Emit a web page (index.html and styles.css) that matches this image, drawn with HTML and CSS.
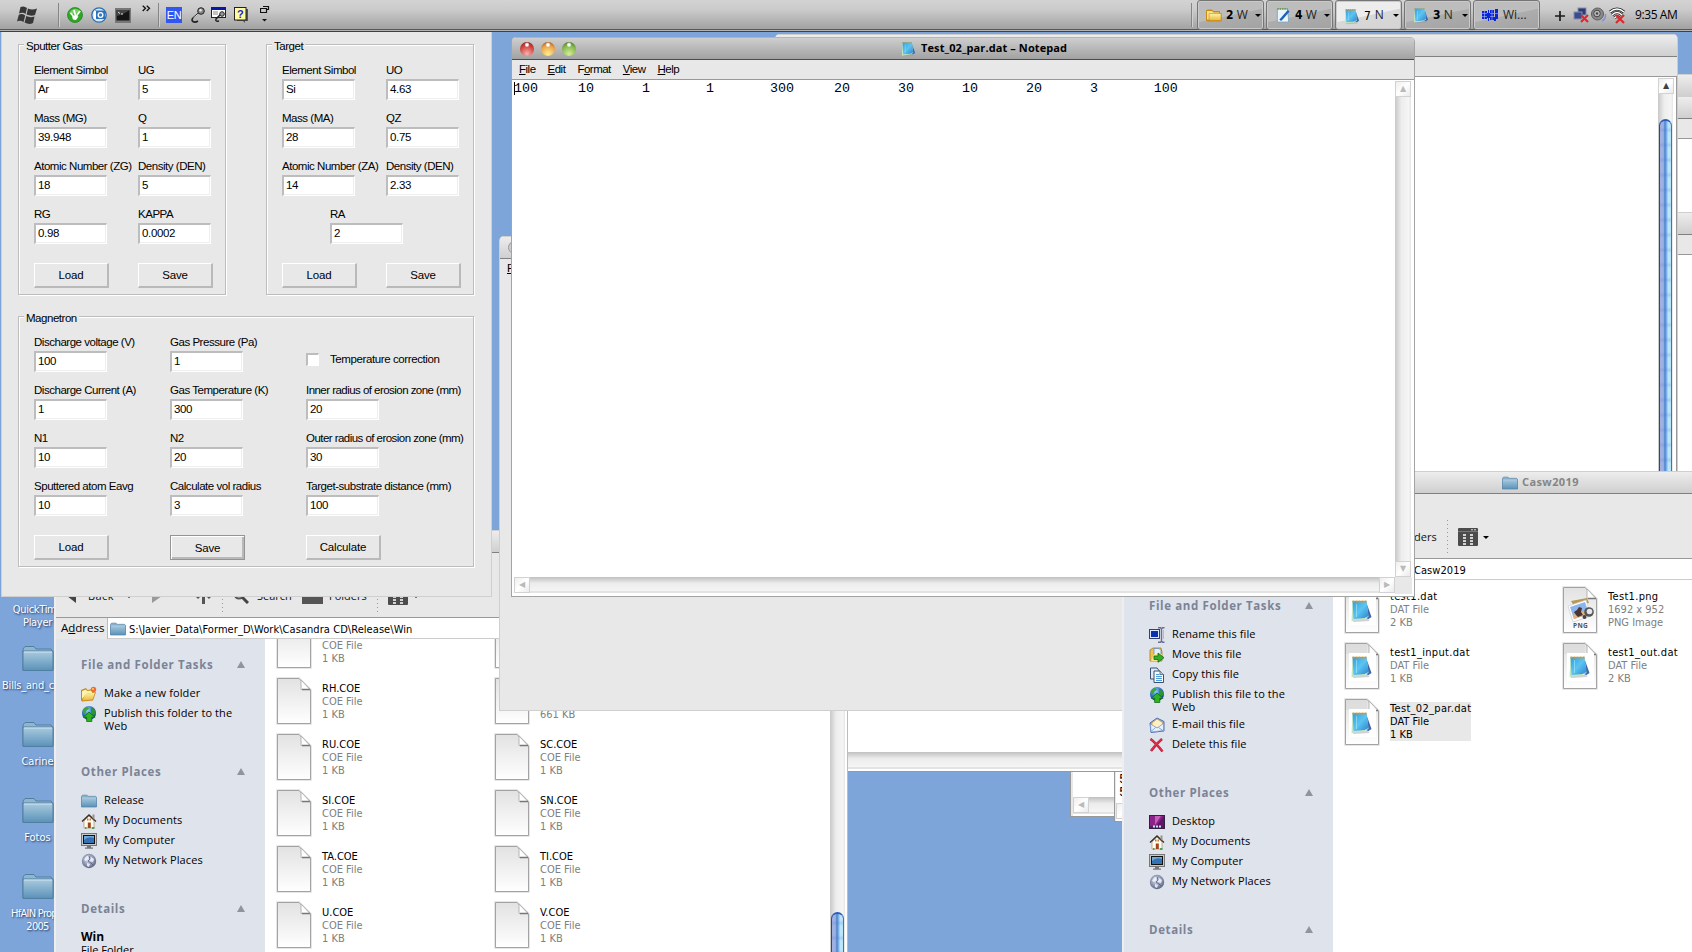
FILE: index.html
```html
<!DOCTYPE html>
<html lang="en">
<head>
<meta charset="utf-8">
<title>Desktop</title>
<link rel="stylesheet" href="styles.css">
</head>
<body>
<svg class="defs" width="0" height="0">
  <defs>
    <linearGradient id="gPage" x1="0" y1="0" x2="0" y2="1"><stop offset="0" stop-color="#e2e2e2"/><stop offset="1" stop-color="#ffffff"/></linearGradient>
    <linearGradient id="gFolder" x1="0" y1="0" x2="0" y2="1"><stop offset="0" stop-color="#a9cbe0"/><stop offset="1" stop-color="#5b92b8"/></linearGradient>
    <linearGradient id="gNote" x1="0" y1="0" x2="1" y2="1"><stop offset="0" stop-color="#2f9fe0"/><stop offset=".5" stop-color="#5cc4f2"/><stop offset="1" stop-color="#2b86cf"/></linearGradient>
    <radialGradient id="gGlobe" cx=".4" cy=".3" r=".8"><stop offset="0" stop-color="#8fd0ff"/><stop offset=".5" stop-color="#2f6fd0"/><stop offset="1" stop-color="#0c2c80"/></radialGradient>
    <radialGradient id="gNet" cx=".45" cy=".4" r=".6"><stop offset="0" stop-color="#dfe3ee"/><stop offset=".6" stop-color="#929bb8"/><stop offset="1" stop-color="#59617e"/></radialGradient>
    <linearGradient id="gYellow" x1="0" y1="0" x2="0" y2="1"><stop offset="0" stop-color="#fff3a8"/><stop offset="1" stop-color="#e9b93c"/></linearGradient>
  </defs>
  <symbol id="page" viewBox="0 0 36 48">
    <path d="M1.500 46.500V1.500H23L34.500 13V46.500Z" fill="none" stroke="#dedede" stroke-width="2.500"/>
    <path d="M1.500 46.500V1.500H23L34.500 13V46.500Z" fill="url(#gPage)" stroke="#a3a3a3"/>
    <path d="M25 3V12.500H34Z" fill="#fff" stroke="#b5b5b5"/>
    <path d="M26 12.500H34" stroke="#777" stroke-width="1.500"/>
  </symbol>
  <symbol id="note" viewBox="0 0 20 24">
    <path d="M2 23L1 22L2 20H17L18 22Z" fill="#999" opacity=".45"/>
    <path d="M15 4L20 18L17 20L14 19Z" fill="#3d68ad"/>
    <path d="M1 3L0 22L13 20L17 18L15 2Z" fill="#bfe6c0"/>
    <path d="M1 2H15L17 17L13 19L2 20Z" fill="url(#gNote)"/>
    <path d="M1 2.500H15" stroke="#c79a43" stroke-width="2" stroke-dasharray="2 1"/>
    <path d="M5 5V18" stroke="#b8f3ff" opacity=".5"/>
  </symbol>
  <symbol id="datfile" viewBox="0 0 36 48">
    <use href="#page" width="36" height="48"/>
    <path d="M2 2H23V12H2Z" fill="#d9d9d9" opacity=".6"/>
    <rect x="5" y="11" width="27" height="28" fill="#fff"/>
    <use href="#note" x="7" y="13" width="21" height="24"/>
  </symbol>
  <symbol id="pngfile" viewBox="0 0 36 48">
    <use href="#page" width="36" height="48"/>
    <path d="M9 15L25 12L27 17L12 20Z" fill="#b59a55"/>
    <path d="M6 20L24 14L29 30L11 36Z" fill="#fff" stroke="#ccc" stroke-width=".7"/>
    <path d="M8 21L23 16L27 28L12 33Z" fill="#8db5ec"/>
    <path d="M12 33L27 28L25.500 24L10.500 29Z" fill="#e4b37c"/>
    <path d="M12 26L15 24L17 21L20 22L19 26L21 29L16 31L14 29Z" fill="#4a3434"/>
    <circle cx="27" cy="26" r="4.800" fill="#555"/><circle cx="27.500" cy="25.500" r="2.800" fill="#e3e7ee"/>
    <circle cx="22.500" cy="31" r="2" fill="#444"/>
  </symbol>
  <symbol id="folder" viewBox="0 0 32 27">
    <path d="M1 25V4L3 1.500H12L14 4H29L31 7V25Z" fill="#8fb6cf" stroke="#537f9d"/>
    <path d="M1 6H31V25.500H1Z" fill="url(#gFolder)" stroke="#4e7fa3"/>
    <path d="M2 7H30" stroke="#cfe4f0"/>
  </symbol>
  <symbol id="yfolder" viewBox="0 0 16 16">
    <path d="M0 13V3L1.500 2H6L7.500 3.500H14V5.500H15.500V14H1.500Z" fill="#c98a17"/>
    <path d="M1 12V3.500H6L7.500 5H13V12Z" fill="#fbe28a"/>
    <path d="M3 6H15V13H3Z" fill="url(#gYellow)" stroke="#c98a17" stroke-width=".6"/>
  </symbol>
  <symbol id="newfolder" viewBox="0 0 16 16">
    <path d="M0 14L0 4L5 2L6.500 4L12 3L12 6L15 6L12 14.500L1 15.500Z" fill="#c9891b"/>
    <path d="M1 13V5L5 3.500L6 5L11 4.500V7L5 8Z" fill="#fff3b0"/>
    <path d="M1.500 14.500L4 8L14 6.500L11.500 13.500Z" fill="url(#gYellow)"/>
    <circle cx="12.500" cy="3.500" r="2.700" fill="#f2683a"/><circle cx="12" cy="3" r="1" fill="#ffd34a"/>
  </symbol>
  <symbol id="globe" viewBox="0 0 16 17">
    <circle cx="8" cy="7.500" r="7.500" fill="url(#gGlobe)"/>
    <path d="M1 7C1 4 3 1.500 6 .7L8 3L5 5L4 8Z" fill="#3ca63a"/><path d="M10 1.500C13 2 15 5 15.400 8L12 10L10 6Z" fill="#2f9433"/>
    <path d="M8 6.500L14.500 12H11V16.500H5.500V12H2Z" fill="#2eb31f" stroke="#0d6a12" stroke-width=".8"/>
  </symbol>
  <symbol id="home" viewBox="0 0 16 16">
    <path d="M3 8V15H13V8L8 3Z" fill="#fffdf0" stroke="#a98d6b" stroke-width=".7"/>
    <path d="M1 8.500L8 2L15 8.500" fill="none" stroke="#3b2d28" stroke-width="1.300"/>
    <path d="M11.500 5V1.500H13.500V7" fill="#9a938a"/>
    <rect x="6.800" y="9.500" width="3" height="5.500" fill="#a3441a"/><path d="M6 5.500H7.500V7.500H6ZM8.500 5.500H10V7.500H8.500Z" fill="#c0763e"/>
    <path d="M4 15H5.500M11 15H13.500" stroke="#2e9130" stroke-width="1.500"/>
  </symbol>
  <symbol id="computer" viewBox="0 0 16 16">
    <rect x=".5" y=".5" width="15" height="12" fill="#c9c9c9" stroke="#777"/>
    <rect x="2.500" y="2.500" width="11" height="8" fill="#3373b4" stroke="#111"/>
    <path d="M3 7Q7 3 13 5V3H3Z" fill="#73a9d8"/>
    <path d="M6 13H10V14.500H12V15.800H4V14.500H6Z" fill="#777"/>
  </symbol>
  <symbol id="network" viewBox="0 0 16 16">
    <circle cx="8" cy="8" r="7.200" fill="url(#gNet)"/>
    <path d="M4 5Q6 2 8 3L7 6L5 8L3 7ZM10 4L13 6L12 9L9 8ZM6 10L9 11L8 14L6 13Z" fill="#f2f4f9" opacity=".85"/>
    <path d="M8 3L9 6L7 8L10 10L12 12" stroke="#515a7c" fill="none" stroke-width=".8"/>
  </symbol>
  <symbol id="rename" viewBox="0 0 16 16">
    <rect x=".5" y="2.500" width="10" height="9" fill="#dfe8ff" stroke="#36406b"/>
    <rect x="2" y="4" width="7" height="6" fill="#0832b0"/>
    <path d="M9 .8H11.500L12.500 2L13.500 .8H15.500M12.500 2V14M9 15.300H11.500L12.500 14L13.500 15.300H15.500" fill="none" stroke="#6b6f8f" stroke-width="1.400"/>
    <path d="M14.500 3V12" stroke="#b4b8d4"/>
  </symbol>
  <symbol id="move" viewBox="0 0 16 16">
    <path d="M1 14V3L4 1H12L13 5V14Z" fill="#e9c35a" stroke="#a57b1c" stroke-width=".8"/>
    <path d="M5 1.500H10L12 3.500V9H5Z" fill="#e5effb" stroke="#6384b5" stroke-width=".7"/>
    <path d="M2 14L5 7H13L11 14Z" fill="#f9e290"/>
    <path d="M5 9H9V6L15 10.700L9 15.300V12.500H5Z" fill="#35ad25" stroke="#136b12" stroke-width=".8"/>
  </symbol>
  <symbol id="copy" viewBox="0 0 16 16">
    <path d="M1.500 12V1H8L10 3.500V12Z" fill="#dfeaf7" stroke="#39506e"/>
    <path d="M5 15.500V4H11L14.500 7.500V15.500Z" fill="#f6fbff" stroke="#39506e"/>
    <path d="M7 7.500H10.500M7 9.500H13M7 11.500H13M7 13.500H13" stroke="#4f9cdc"/>
    <path d="M11 4V7.500H14.500" fill="#b9cfe6" stroke="#39506e" stroke-width=".7"/>
  </symbol>
  <symbol id="mail" viewBox="0 0 16 16">
    <path d="M1 6L8 1L15 4.500V14L2 15.500Z" fill="#8fb0e4" stroke="#5270ac"/>
    <path d="M3 6L8 2L13.500 5.500V9L8 11L3 9Z" fill="#fff0c2" stroke="#d09a3b" stroke-width=".7"/>
    <path d="M1.500 7L8 11L14.500 6.500V13.500L2 15Z" fill="#e8f1fe" stroke="#7493cc" stroke-width=".7"/>
    <path d="M2 14.500L6.500 10.500M14 13.500L9.500 10.500" stroke="#7493cc" stroke-width=".8"/>
  </symbol>
  <symbol id="delete" viewBox="0 0 16 16">
    <path d="M1.500 2Q7 6 13.500 14.500M13 2Q7 7 2 14" fill="none" stroke="#a81c3a" stroke-width="2.400"/>
    <path d="M1.500 2Q7 6 13.500 14M13 2Q7 7 2 13.500" fill="none" stroke="#ee2c44" stroke-width="1.400"/>
  </symbol>
  <symbol id="desktop" viewBox="0 0 16 16">
    <rect x=".5" y="1.500" width="15" height="13" fill="#5e1766" stroke="#332040"/>
    <path d="M1 2L15 2L7 12L1 12Z" fill="#8a2289"/><path d="M6 2L12 2L6 11Z" fill="#ef8ad6" opacity=".6"/>
    <path d="M4 12.500H13" stroke="#cfe2ff" stroke-width="1.800" stroke-dasharray="2 1"/>
  </symbol>
  <symbol id="views" viewBox="0 0 20 18">
    <rect width="20" height="18" rx="1" fill="#4c4c4c"/><path d="M0 3.500H20" stroke="#777"/>
    <path d="M13 1.800H18" stroke="#ddd" stroke-dasharray="2 1"/>
    <path d="M5 7H8M5 10H8M5 13H8M5 16H8M12 7H15M12 10H15M12 13H15M12 16H15" stroke="#fff" stroke-width="1.400"/>
  </symbol>
</svg>

<main class="desktop">

  <!-- desktop shortcuts -->
  <section class="shortcuts">
    <div class="shortcut quick"><span>QuickTime<br>Player</span></div>
    <div class="shortcut"><svg width="32" height="27"><use href="#folder"/></svg><span class="wide">Bills_and_c</span></div>
    <div class="shortcut"><svg width="32" height="27"><use href="#folder"/></svg><span>Carine</span></div>
    <div class="shortcut"><svg width="32" height="27"><use href="#folder"/></svg><span>Fotos</span></div>
    <div class="shortcut"><svg width="32" height="27"><use href="#folder"/></svg><span class="wide">HfAlN Prop<br>2005</span></div>
  </section>

  <!-- background windows -->
  <section class="win edge-win"><div class="titlebar"></div><div class="titlebar"></div><div class="menubar"></div><div class="blank"></div></section>
  <section class="win edge-win-2"><div class="titlebar"></div><div class="menubar"></div><div class="blank"></div></section>

  <section class="win rear-win">
    <div class="titlebar"></div><div class="menubar"></div>
    <div class="rear-body">
      <div class="vscroll"><b class="sbtn">▲</b><i class="thumb"></i></div>
    </div>
  </section>

  <section class="win small-a"><div class="blank"></div><div class="hscroll"><b class="sbtn">◀</b></div></section>
  <section class="win small-b"><div class="blank">5<br>5</div><div class="hscroll"><b class="sbtn"></b></div></section>
  <section class="win lower-win"><div class="blank"></div><div class="hscroll"></div></section>

  <!-- Explorer: Win -->
  <section class="win explorer left-explorer">
    <div class="titlebar"></div>
    <div class="toolbar">
      <svg class="nav-back" width="9" height="14"><path d="M9 0V14L0 7Z" fill="#444"/></svg>
      <span class="t-back">Back</span><span class="caret dot"></span>
      <svg class="nav-fwd" width="10" height="14"><path d="M0 0V14L10 7Z" fill="#999"/></svg>
      <svg class="nav-up" width="15" height="15"><path d="M7.500 0V15M1 9L7.500 2L14 9" stroke="#555" stroke-width="3" fill="none"/></svg>
      <i class="tsep s1"></i>
      <svg class="t-mag" width="16" height="16"><circle cx="6" cy="6" r="4.500" fill="#ddd" stroke="#555" stroke-width="2"/><path d="M9 9L15 15" stroke="#444" stroke-width="3"/></svg>
      <span class="t-search">Search</span>
      <i class="t-folder"></i><span class="t-folders">Folders</span>
      <i class="tsep s2"></i>
      <svg class="t-views" width="20" height="18"><use href="#views"/></svg><span class="caret"></span>
    </div>
    <div class="address"><span class="addr-label">A<u>d</u>dress</span>
      <div class="addr-field"><svg width="16" height="14"><use href="#folder"/></svg><span>S:\Javier_Data\Former_D\Work\Casandra CD\Release\Win</span></div>
    </div>
    <div class="ex-body">
      <aside class="sidebar">
        <h3>File and Folder Tasks<i></i></h3>
        <ul>
          <li><svg><use href="#newfolder"/></svg><span>Make a new folder</span></li>
          <li class="two"><svg><use href="#globe"/></svg><span>Publish this folder to the<br>Web</span></li>
        </ul>
        <h3>Other Places<i></i></h3>
        <ul>
          <li><svg><use href="#folder"/></svg><span>Release</span></li>
          <li><svg><use href="#home"/></svg><span>My Documents</span></li>
          <li><svg><use href="#computer"/></svg><span>My Computer</span></li>
          <li><svg><use href="#network"/></svg><span>My Network Places</span></li>
        </ul>
        <h3>Details<i></i></h3>
        <p class="details"><strong>Win</strong><br>File Folder</p>
      </aside>
      <div class="files coe">
        <div class="file"><svg><use href="#page"/></svg><p>&nbsp;<em>COE File</em><em>1 KB</em></p></div>
        <div class="file"><svg><use href="#page"/></svg><p></p></div>
        <div class="file"><svg><use href="#page"/></svg><p>RH.COE<em>COE File</em><em>1 KB</em></p></div>
        <div class="file"><svg><use href="#page"/></svg><p>&nbsp;<em>&nbsp;</em><em>661 KB</em></p></div>
        <div class="file"><svg><use href="#page"/></svg><p>RU.COE<em>COE File</em><em>1 KB</em></p></div>
        <div class="file"><svg><use href="#page"/></svg><p>SC.COE<em>COE File</em><em>1 KB</em></p></div>
        <div class="file"><svg><use href="#page"/></svg><p>SI.COE<em>COE File</em><em>1 KB</em></p></div>
        <div class="file"><svg><use href="#page"/></svg><p>SN.COE<em>COE File</em><em>1 KB</em></p></div>
        <div class="file"><svg><use href="#page"/></svg><p>TA.COE<em>COE File</em><em>1 KB</em></p></div>
        <div class="file"><svg><use href="#page"/></svg><p>TI.COE<em>COE File</em><em>1 KB</em></p></div>
        <div class="file"><svg><use href="#page"/></svg><p>U.COE<em>COE File</em><em>1 KB</em></p></div>
        <div class="file"><svg><use href="#page"/></svg><p>V.COE<em>COE File</em><em>1 KB</em></p></div>
      </div>
      <div class="vscroll ex-scroll"><i class="thumb"></i></div>
    </div>
  </section>

  <section class="win console-win">
    <div class="titlebar"><i class="ring"></i></div>
    <div class="menubar"><u>F</u></div>
  </section>

  <!-- Explorer: Casw2019 -->
  <section class="win explorer right-explorer">
    <div class="titlebar"><svg width="16" height="14"><use href="#folder"/></svg><span>Casw2019</span></div>
    <div class="toolbar">
      <span class="t-folders solo">Folders</span>
      <i class="tsep s2"></i>
      <svg class="t-views" width="20" height="18"><use href="#views"/></svg><span class="caret"></span>
    </div>
    <div class="address"><div class="addr-field"><span>Casw2019</span></div></div>
    <div class="ex-body">
      <aside class="sidebar">
        <h3>File and Folder Tasks<i></i></h3>
        <ul>
          <li><svg><use href="#rename"/></svg><span>Rename this file</span></li>
          <li><svg><use href="#move"/></svg><span>Move this file</span></li>
          <li><svg><use href="#copy"/></svg><span>Copy this file</span></li>
          <li class="two"><svg><use href="#globe"/></svg><span>Publish this file to the<br>Web</span></li>
          <li><svg><use href="#mail"/></svg><span>E-mail this file</span></li>
          <li><svg><use href="#delete"/></svg><span>Delete this file</span></li>
        </ul>
        <h3>Other Places<i></i></h3>
        <ul>
          <li><svg><use href="#desktop"/></svg><span>Desktop</span></li>
          <li><svg><use href="#home"/></svg><span>My Documents</span></li>
          <li><svg><use href="#computer"/></svg><span>My Computer</span></li>
          <li><svg><use href="#network"/></svg><span>My Network Places</span></li>
        </ul>
        <h3>Details<i></i></h3>
      </aside>
      <div class="files dat">
        <div class="file"><svg><use href="#datfile"/></svg><p>test1.dat<em>DAT File</em><em>2 KB</em></p></div>
        <div class="file"><span class="pngwrap"><svg><use href="#pngfile"/></svg><small>PNG</small></span><p>Test1.png<em>1692 x 952</em><em>PNG Image</em></p></div>
        <div class="file"><svg><use href="#datfile"/></svg><p>test1_input.dat<em>DAT File</em><em>1 KB</em></p></div>
        <div class="file"><svg><use href="#datfile"/></svg><p>test1_out.dat<em>DAT File</em><em>2 KB</em></p></div>
        <div class="file selected"><svg><use href="#datfile"/></svg><p>Test_02_par.dat<em>DAT File</em><em>1 KB</em></p></div>
      </div>
    </div>
  </section>

  <!-- Notepad -->
  <section class="win notepad">
    <div class="titlebar active">
      <div class="lights"><i class="red"></i><i class="amber"></i><i class="green"></i></div>
      <svg width="15" height="16"><use href="#note"/></svg><span>Test_02_par.dat – Notepad</span>
    </div>
    <div class="menubar"><span><u>F</u>ile</span><span><u>E</u>dit</span><span>F<u>o</u>rmat</span><span><u>V</u>iew</span><span><u>H</u>elp</span></div>
    <div class="np-body">
      <pre class="np-text">100	10	1	1	300	20	30	10	20	3	100</pre>
      <div class="vscroll pale"><b class="sbtn">▲</b><b class="sbtn">▼</b></div>
      <div class="hscroll pale"><b class="sbtn">◀</b><b class="sbtn">▶</b></div>
      <div class="corner"></div>
    </div>
  </section>

  <!-- Sputter form -->
  <section class="form-win">
    <div class="group two-col">
      <span class="legend">Sputter Gas</span>
      <label>Element Simbol<b>Ar</b></label><label>UG<b>5</b></label>
      <label>Mass (MG)<b>39.948</b></label><label>Q<b>1</b></label>
      <label>Atomic Number (ZG)<b>18</b></label><label>Density (DEN)<b>5</b></label>
      <label>RG<b>0.98</b></label><label>KAPPA<b>0.0002</b></label>
      <button>Load</button><button>Save</button>
    </div>
    <div class="group two-col">
      <span class="legend">Target</span>
      <label>Element Simbol<b>Si</b></label><label>UO<b>4.63</b></label>
      <label>Mass (MA)<b>28</b></label><label>QZ<b>0.75</b></label>
      <label>Atomic Number (ZA)<b>14</b></label><label>Density (DEN)<b>2.33</b></label>
      <label class="middle">RA<b>2</b></label>
      <button>Load</button><button>Save</button>
    </div>
    <div class="group three-col">
      <span class="legend">Magnetron</span>
      <label>Discharge voltage (V)<b>100</b></label><label>Gas Pressure (Pa)<b>1</b></label>
      <div class="check"><i></i><span>Temperature correction</span></div>
      <label>Discharge Current (A)<b>1</b></label><label>Gas Temperature (K)<b>300</b></label><label class="long">Inner radius of erosion zone (mm)<b>20</b></label>
      <label>N1<b>10</b></label><label>N2<b>20</b></label><label class="long">Outer radius of erosion zone (mm)<b>30</b></label>
      <label>Sputtered atom Eavg<b>10</b></label><label>Calculate vol radius<b>3</b></label><label>Target-substrate distance (mm)<b>100</b></label>
      <button>Load</button><button class="default">Save</button><button>Calculate</button>
    </div>
  </section>

  <!-- taskbar -->
  <header class="taskbar">
    <div class="quick-launch">
      <svg class="q-start" width="21" height="19" viewBox="0 0 21 19"><path d="M3.500 1Q7 -.5 10 2L8.500 8Q6 6 2 7.500ZM11 2.500Q15 4.500 20 2.500L18 9Q14 10.500 9.500 8.500ZM1.800 8.800Q5 7 8.200 9.500L6.500 16Q3 14 0 15.500ZM9.300 10Q13 12 17.500 10.500L16 17Q12 19 7.600 16.500Z" fill="#383838"/></svg>
      <i class="sep q-sep1"></i>
      <svg class="q-a" width="16" height="16"><circle cx="8" cy="8" r="7.500" fill="#2fa827" stroke="#1b7f1b" stroke-width=".7"/><path d="M2 6Q8 -2 14 5Q8 9 2 6Z" fill="#9be27c" opacity=".7"/><path d="M3.500 6L7 10M7 3L8.500 9M13 4L9 9.500" stroke="#fff" stroke-width="1.700" fill="none"/><path d="M5 9.500L8 8.500L11.500 9.500L9 13L6 12.500Z" fill="#fff"/></svg>
      <svg class="q-b" width="16" height="16"><circle cx="8" cy="8" r="7.200" fill="#d5e9fb" stroke="#2b6cb0" stroke-width="1.300"/><rect x="4" y="3.500" width="10" height="8.500" fill="#2d74bd"/><rect x="3" y="4" width="2" height="8" fill="#fff"/><circle cx="9.500" cy="8" r="3" fill="#fff"/><circle cx="9.500" cy="8" r="1.700" fill="#337fc9"/></svg>
      <svg class="q-c" width="16" height="15"><rect width="16" height="15" fill="#777"/><rect x="1.500" y="2" width="13" height="10.500" fill="#151515"/><path d="M1.500 8Q8 7 14.500 2V2H1.500Z" fill="#444"/><path d="M3 4L5 5.500M6 6H8" stroke="#ddd"/></svg>
      <svg class="q-more" width="9" height="7"><path d="M.7 .7L3.500 3.300L.7 6M4.700 .7L7.500 3.300L4.700 6" fill="none" stroke="#111" stroke-width="1.300"/></svg>
      <i class="sep q-sep2"></i>
      <span class="q-en">EN</span>
      <svg class="q-mic" width="16" height="17"><path d="M10 5L3 11Q1 13 3 14.500Q5 16 8 14" fill="none" stroke="#222" stroke-width="1.600"/><path d="M9.500 6L3.500 11" stroke="#ddd"/><circle cx="11" cy="4" r="3.300" fill="#888" stroke="#222"/><circle cx="10.500" cy="3.300" r="1.200" fill="#eee"/></svg>
      <svg class="q-d" width="16" height="16"><rect x=".5" y=".5" width="14" height="10" fill="#fff" stroke="#222"/><rect width="15" height="3" fill="#0719a8"/><path d="M2 5H7M2 7H7" stroke="#888"/><path d="M11 6L5 12Q4 15 8 14" fill="none" stroke="#222" stroke-width="1.500"/><circle cx="11" cy="7" r="2.300" fill="#999" stroke="#222"/></svg>
      <svg class="q-help" width="15" height="16"><path d="M3 2H14V14H11V16L9 14H3Z" fill="#555"/><rect x=".5" y=".5" width="11.500" height="12.500" fill="#fffb9c" stroke="#222"/><text x="3" y="11" class="qmark">?</text></svg>
      <svg class="q-rest" width="10" height="18"><path d="M3 1.500H8.500V4.500H6M.5 3.500H6.500V7.500H.5Z" fill="none" stroke="#111" stroke-width="1.200"/><path d="M2 14H7L4.500 16.500Z" fill="#111"/></svg>
    </div>
    <div class="tasks">
      <i class="sep"></i>
      <div class="task"><svg><use href="#yfolder"/></svg><b>2</b><span>W</span><i></i></div>
      <div class="task"><svg viewBox="0 0 16 18"><path d="M2 2H13L14 16H2Z" fill="#eaf5fb" stroke="#7fa9bd"/><path d="M2 2H13" stroke="#6b9b56" stroke-width="2" stroke-dasharray="1.500 1"/><path d="M14 4L7 12L5 14" stroke="#1d62b5" stroke-width="2.500"/></svg><b>4</b><span>W</span><i></i></div>
      <div class="task on"><svg><use href="#note"/></svg><b>7</b><span>N</span><i></i></div>
      <div class="task"><svg><use href="#note"/></svg><b>3</b><span>N</span><i></i></div>
      <div class="task"><svg class="wi" viewBox="0 0 17 13"><path d="M0 2H5V10H0ZM6 1H7V12H6ZM5 4H8V9H5ZM8 1H12V11H8ZM13 0H16V10H13ZM12 8H14V12H12Z" fill="#0a22d8"/><path d="M0 4.500H5M0 7.500H5M2.500 2V10M8 4.500H12M8 7.500H12M10 1V11M13 4.500H16" stroke="#bcd0f4" stroke-width=".5"/></svg><span>Wi...</span></div>
    </div>
    <div class="tray">
      <svg width="10" height="10"><path d="M5 0V10M0 5H10" stroke="#1b1b1b" stroke-width="1.700"/></svg>
      <svg width="16" height="17"><rect x="5" y="1" width="8" height="7" fill="#2d3a78" stroke="#8790a8"/><rect x="1" y="5" width="8" height="7" fill="#3a4b92" stroke="#8790a8"/><path d="M8 8L15 15M15 8L8 15" stroke="#e5262b" stroke-width="2.200"/></svg>
      <svg width="16" height="16"><circle cx="6.500" cy="7" r="6" fill="#8b8b8b" stroke="#5c5c5c"/><circle cx="6" cy="6.500" r="3.300" fill="#bbb" stroke="#444"/><circle cx="6" cy="6.500" r="1.200" fill="#444"/><path d="M11 14Q15 12 14.500 7" stroke="#8a90d8" fill="none" stroke-width="1.500"/></svg>
      <svg width="17" height="17"><path d="M1 5Q8 -1 15 5M3 8Q8 3 13 8M5.500 11Q8 8 10.500 11" stroke="#222" stroke-width="3" fill="none"/><path d="M1 5Q8 -1 15 5M3 8Q8 3 13 8M5.500 11Q8 8 10.500 11" stroke="#fff" stroke-width="1.600" fill="none"/><path d="M7 8L15 16M15 8L7 16" stroke="#e5262b" stroke-width="2.200"/></svg>
      <span class="clock">9:35 AM</span>
    </div>
  </header>
</main>
</body>
</html>
```

FILE: styles.css
```css
* { box-sizing: border-box; }
body { margin: 0; }
.defs { position: absolute; }
ul, p, h3, pre { margin: 0; padding: 0; list-style: none; }
svg { display: block; flex: none; }

.desktop {
  position: relative;
  width: 1692px;
  height: 952px;
  overflow: hidden;
  background: #7ea5da;
  color: #000;
  font: 11px/13px "DejaVu Sans Condensed", "DejaVu Sans", sans-serif;
  font-stretch: condensed;
}

/* taskbar */
.taskbar {
  position: absolute;
  inset: 0 0 auto 0;
  height: 32px;
  display: flex;
  align-items: flex-start;
  background: linear-gradient(#d3d3d3, #cbcbcb 30%, #a4a4a4 28px, #a8a8a8 29px, #565656 29px, #565656 30px, #b4b4b4 30px, #b4b4b4 31px, #3f3f3f 31px);
}
.sep { display: block; width: 2px; height: 24px; background: linear-gradient(90deg, #858585 50%, #d0d0d0 50%); }
.quick-launch { display: flex; width: 1191px; padding-left: 17px; }
.q-start { margin-top: 6px; }
.q-sep1 { margin: 3px 0 0 20px; }
.q-a { margin: 7px 0 0 7px; }
.q-b { margin: 7px 0 0 8px; }
.q-c { margin: 8px 0 0 8px; }
.q-more { margin: 5px 7px 0 11px; }
.q-sep2 { margin: 3px 0 0 0; }
.q-en { width: 16px; height: 16px; margin: 7px 0 0 6px; background: #3157f0; color: #fff; font: 11px/17px "Liberation Sans", sans-serif; letter-spacing: -.5px; text-align: center; }
.q-mic { margin: 7px 0 0 8px; }
.q-d { margin: 7px 0 0 5px; }
.q-help { margin: 7px 0 0 7px; }
.q-rest { margin: 5px 0 0 11px; }
.qmark { font: bold 11px "Liberation Sans", sans-serif; fill: #1328d0; }

.tasks { display: flex; gap: 2px; }
.tasks > .sep { margin: 3px 2px 0 0; }
.task {
  display: flex;
  align-items: center;
  width: 67px;
  height: 30px;
  padding: 0 2px 0 8px;
  border: 1px solid #757575;
  border-radius: 3px;
  box-shadow: inset 0 0 0 1px #cacaca;
  background: linear-gradient(168deg, #bdbdbd 50%, #adadad 52%, #a2a2a2);
  font: 12px/16px "Open Sans", sans-serif;
  color: #222;
}
.task svg { width: 16px; height: 17px; }
.task svg.wi { width: 17px; height: 13px; }
.task b { width: 12px; margin-left: 4px; font: bold 12px/16px "DejaVu Sans Condensed", sans-serif; color: #000; }
.task span { width: 17px; }
.task .wi + span { margin-left: 4px; width: 26px; }
.task i { border: 3px solid transparent; border-top-color: #000; border-bottom: 0; margin-left: 3px; }
.task.on { background: linear-gradient(168deg, #ededed 50%, #d8d8d8 52%, #d4d4d4); }
.task.on svg, .task.on b { position: relative; top: 1px; }
.task.on b { font-weight: normal; }
.tray { display: flex; align-items: center; height: 30px; margin-left: 15px; gap: 2px; }
.tray svg:first-child { margin-right: 6px; margin-top: 2px; }
.clock { margin-left: 7px; white-space: nowrap; font: 12px/16px "Open Sans", sans-serif; letter-spacing: -.4px; }

/* desktop shortcuts */
.shortcuts { position: absolute; left: 0; top: 603px; width: 75px; display: flex; flex-direction: column; color: #fff; text-shadow: 1px 1px 2px #16305c; }
.shortcut { display: flex; flex-direction: column; align-items: center; height: 76px; gap: 7px; text-align: center; }
.shortcut.quick { height: 42px; letter-spacing: -.3px; }
.shortcut .wide { align-self: flex-start; margin-left: 2px; white-space: nowrap; letter-spacing: -.2px; }
.shortcut:last-child span { width: 71px; letter-spacing: -.7px; text-indent: -7px; }

/* shared window parts */
.win { position: absolute; display: flex; flex-direction: column; background: #e8e8e8; overflow: hidden; }
.titlebar { flex: none; height: 23px; border-top: 1px solid #cfcfcf; border-bottom: 1px solid #808080; background: linear-gradient(#ededed, #cfcfcf); }
.menubar { flex: none; height: 20px; background: #e8e8e8; border-bottom: 1px solid #999; font: 11.500px/19px "Liberation Sans", sans-serif; }
.blank { flex: 1; background: #fff; }
.vscroll { width: 15px; background: linear-gradient(90deg, #c8c8c8, #ededed 40%, #f5f5f5 85%, #e5e5e5); display: flex; flex-direction: column; justify-content: space-between; }
.hscroll { flex: none; height: 18px; background: linear-gradient(#c0c0c0, #ececec 35%, #f5f5f5 80%, #e3e3e3 80%, #e3e3e3 88%, #fff 88%); display: flex; justify-content: space-between; }
.sbtn { display: block; width: 16px; height: 16px; border: 1px solid #d2d2d2; background: linear-gradient(135deg, #eee, #fff 50%, #eaeaea); font: 8px/14px "DejaVu Sans", sans-serif; text-align: center; color: #3f3f3f; }
.small-a .sbtn, .small-b .sbtn, .pale .sbtn { color: #bababa; }
.thumb { display: block; width: 13px; margin-left: 1px; border-radius: 7px 7px 0 0; border: 1px solid #4a6fb0; border-top: 2px solid #2c5cb8; border-bottom: 0; border-left: 1px solid #1d49a8; background: repeating-linear-gradient(transparent 0 6px, rgba(60, 110, 200, .18) 9px, transparent 12px 15px), linear-gradient(90deg, #a2b0df 0, #9cb2e2 30%, #4a82ce 45%, #7fb4ea 60%, #bfe6fb 75%, #b4e4fb); }

.edge-win { left: 1500px; top: 74px; width: 192px; height: 160px; }
.edge-win .titlebar:first-child { height: 22px; border-bottom: 0; }
.edge-win-2 { left: 1500px; top: 212px; width: 192px; height: 300px; }
.rear-win { left: 775px; top: 34px; width: 903px; height: 460px; border-radius: 5px 5px 0 0; border-right: 1px solid #ccc; }
.rear-body { flex: 1; display: flex; justify-content: flex-end; padding: 1px 3px 0 0; background: #fff; border-right: 1px solid #999; }
.rear-body .vscroll { justify-content: flex-start; }
.rear-body .thumb { flex: 1; margin-top: 25px; }
.small-a { left: 1070px; top: 760px; width: 60px; height: 57px; border: 1px solid #999; border-top: 0; padding: 0 1px 0 2px; }
.small-a .hscroll { height: 19px; }
.small-b { left: 1114px; top: 760px; width: 40px; height: 62px; border: 1px solid #999; border-top: 0; padding: 0 1px; }
.small-b .blank { padding: 13px 0 0 3px; font: 13.333px/13px "Liberation Mono", monospace; }
.lower-win { left: 840px; top: 690px; width: 290px; height: 82px; border-bottom: 1px solid #999; border-left: 1px solid #ccc; }
.lower-win .hscroll { height: 19px; }
.console-win { left: 499px; top: 236px; width: 640px; height: 475px; border-left: 1px solid #cfcfcf; border-bottom: 1px solid #cfcfcf; border-radius: 5px 0 0 0; }
.console-win .menubar { padding-left: 7px; border: 0; }
.ring { display: block; width: 13px; height: 13px; margin: 4px 0 0 8px; border-radius: 50%; border: 1px solid #999; background: #ccc; }

/* explorer */
.explorer { border-left: 2px solid #eee; }
.left-explorer { left: 54px; top: 530px; width: 794px; height: 430px; border-right: 1px solid #bbb; }
.right-explorer { left: 1122px; top: 471px; width: 570px; height: 490px; }
.right-explorer .titlebar { display: flex; align-items: center; padding-left: 378px; gap: 4px; color: #858585; font: bold 11px/20px "Open Sans", sans-serif; letter-spacing: .4px; }
.right-explorer .titlebar span { margin-top: -2px; }
.toolbar { flex: none; height: 65px; padding: 22px 0 0 11px; border-bottom: 1px solid #999; display: flex; align-items: center; font: 11px/14px "Open Sans", sans-serif; color: #111; white-space: nowrap; }
.t-back { width: 35px; margin-left: 12px; letter-spacing: .4px; }
.nav-fwd { margin-left: 20px; }
.nav-up { margin-left: 34px; }
.s1 { margin-left: 11px; }
.tsep { width: 1px; height: 34px; background: repeating-linear-gradient(#999 0 1px, transparent 1px 4px); }
.t-mag { margin-left: 10px; }
.t-search { width: 40px; margin-left: 8px; }
.t-folder { width: 21px; height: 16px; margin-left: 5px; background: #555; }
.t-folders { width: 42px; margin-left: 6px; }
.s2 { margin-left: 6px; }
.t-folders.solo { margin-left: 264px; }
.t-views { margin-left: 10px; }
.caret { margin-left: 5px; border: 3px solid transparent; border-top-color: #000; border-bottom: 0; }
.caret.dot { margin-left: 3px; }
.address { flex: none; display: flex; height: 21px; }
.addr-label { width: 51px; padding: 2px 0 0 5px; font: 11.500px/15px "Open Sans", sans-serif; }
.addr-field { flex: 1; display: flex; align-items: center; gap: 3px; padding: 2px 0 0 2px; background: #fff; border-bottom: 1px solid #ccc; border-left: 1px solid #bbb; font-size: 11px; letter-spacing: .06px; }
.right-explorer .addr-field { padding-left: 289px; }
.ex-body { flex: 1; min-height: 0; display: flex; background: #fff; overflow: hidden; }
.sidebar { flex: none; width: 209px; padding: 18px 0 0 25px; background: #dfe3ec; font: 11px/13px "Open Sans", sans-serif; letter-spacing: .1px; }
.sidebar h3 { display: flex; justify-content: space-between; align-items: center; height: 16px; padding-right: 20px; font: bold 11.500px/16px "Open Sans", sans-serif; letter-spacing: .62px; color: #7b8396; }
.sidebar h3 i { border: 4.500px solid transparent; border-bottom: 7px solid #8f949f; border-top: 0; margin-top: -2px; }
.sidebar ul { display: flex; flex-direction: column; gap: 7px; margin: 13px 0 35px; }
.sidebar li { display: flex; gap: 7px; height: 13px; }
.sidebar li.two { height: 23px; }
.sidebar li svg { width: 16px; height: 16px; }
.sidebar li span { white-space: nowrap; }
.details { padding-top: 13px; letter-spacing: 0; }
.details strong { font-size: 12px; }

.files { flex: 1; display: grid; grid-template-columns: 218px 1fr; grid-auto-rows: 56px; align-content: start; }
.file { display: flex; gap: 10px; }
.file svg { width: 36px; height: 48px; }
.file p { align-self: flex-start; margin-top: 5px; white-space: nowrap; }
.file em { display: block; font-style: normal; color: #808080; letter-spacing: 0; }
.file.selected p { background: #e8e8e8; }
.file.selected em { color: #000; }
.coe { margin-top: -18px; padding-left: 11px; }
.dat { padding: 6px 0 0 11px; letter-spacing: .32px; }
.dat .file p { margin-top: 4px; }
.pngwrap { position: relative; }
.pngwrap small { position: absolute; left: 11px; top: 36px; font: bold 6.500px/8px "Open Sans", sans-serif; color: #555; }
.ex-scroll { justify-content: flex-end; margin-right: 2px; }
.ex-scroll .thumb { height: 48px; }

/* notepad */
.notepad { left: 511px; top: 37px; width: 904px; height: 560px; border: 1px solid #a3a3a3; border-top: 0; border-radius: 5px 5px 0 0; }
.titlebar.active { display: flex; align-items: center; gap: 5px; padding-left: 8px; border-top-color: #b5b5b5; border-bottom-color: #4b4b4b; background: linear-gradient(#cecece, #a2a2a2); font: bold 11px/20px "Open Sans", sans-serif; letter-spacing: .1px; }
.titlebar.active span { margin-top: -2px; }
.lights { display: flex; gap: 7px; width: 376px; }
.lights i { width: 14px; height: 14px; border-radius: 50%; }
.lights .red { background: radial-gradient(circle at 50% 20%, #fff 0 8%, transparent 20%), radial-gradient(circle at 50% 85%, #f6b3ad, #cf3f3b 60%, #7a1a18); }
.lights .amber { background: radial-gradient(circle at 50% 20%, #fff 0 8%, transparent 20%), radial-gradient(circle at 50% 85%, #fdf08e, #eaa04b 60%, #82481b); }
.lights .green { background: radial-gradient(circle at 50% 20%, #fff 0 8%, transparent 20%), radial-gradient(circle at 50% 85%, #d3ee98, #84b64d 60%, #3c6420); }
.notepad .menubar { display: flex; gap: 12px; padding-left: 7px; letter-spacing: -.5px; }
.np-body { flex: 1; display: grid; grid-template: 1fr 19px / 1fr 19px; background: #fff; }
.np-text { padding: 1px 0 0 2px; font: 13.333px/15px "Liberation Mono", monospace; tab-size: 8; }
.np-text::before { content: ""; float: left; width: 1px; height: 13px; margin: 1px -1px 0 0; background: #000; }
.np-body .vscroll { width: 16px; margin-top: 1px; }
.np-body .hscroll { margin-left: 2px; }
.corner { background: #e8e8e8; margin: 0 2px 2px 0; }

/* form */
.form-win {
  position: absolute;
  left: 1px;
  top: 32px;
  width: 491px;
  height: 565px;
  display: grid;
  grid-template-columns: 208px 208px;
  grid-template-rows: 251px 251px;
  gap: 21px 40px;
  padding: 12px 0 0 16px;
  background: #e8e8e8;
  border: solid #cfcfcf;
  border-width: 0 1px 1px 1px;
  font: 11.500px/14px "Liberation Sans", sans-serif;
  letter-spacing: -.47px;
}
.group { position: relative; display: grid; grid-auto-rows: 48px; align-content: start; justify-content: start; padding: 18px 0 0 15px; border: 1px solid #bdbdbd; box-shadow: 1px 1px 0 #fff, inset 1px 1px 0 #fff; }
.two-col { grid-template-columns: 104px 100px; }
.three-col { grid-column: span 2; grid-template-columns: 136px 136px 170px; }
.legend { position: absolute; left: 5px; top: -6px; padding: 0 2px; background: #e8e8e8; }
.group label { display: flex; flex-direction: column; gap: 2px; white-space: nowrap; }
.group label.long { letter-spacing: -.54px; }
.group .middle { grid-column: span 2; margin-left: 48px; }
.group label b { width: 73px; height: 21px; padding: 1px 0 0 2px; background: #fff; border: 1px solid #fff; border-top: 2px solid #bdbdbd; border-left: 2px solid #bdbdbd; box-shadow: inset -1px -1px 0 #eee; font-weight: normal; letter-spacing: -.35px; }
.group button { width: 75px; height: 25px; margin-top: 8px; padding: 0; border: 1px solid #fff; border-right: 2px solid #b9b9b9; border-bottom: 2px solid #b9b9b9; background: #e8e8e8; color: #000; font: inherit; letter-spacing: -.15px; }
.group button.default { border: 1px solid #949494; box-shadow: inset 1px 1px 0 #fff, inset -2px -2px 0 #b9b9b9; }
.check { display: flex; gap: 11px; padding-top: 18px; white-space: nowrap; letter-spacing: -.4px; }
.check i { width: 13px; height: 13px; background: #fff; border: 1px solid #fff; border-top: 2px solid #bdbdbd; border-left: 2px solid #bdbdbd; }
.check span { margin-top: -1px; }
```
